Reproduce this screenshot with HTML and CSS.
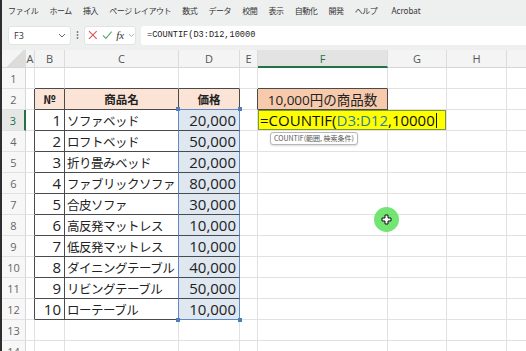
FILE: index.html
```html
<!DOCTYPE html>
<html lang="ja">
<head>
    <meta charset="UTF-8">
    <title>COUNTIF</title>
    <link rel="stylesheet" href="styles.css">
</head>
<body>
<div class="app">
    <div class="tabs">
        <span>ファイル</span><span>ホーム</span><span>挿入</span><span>ページ レイアウト</span><span>数式</span><span>データ</span><span>校閲</span><span>表示</span><span>自動化</span><span>開発</span><span>ヘルプ</span><span>Acrobat</span>
    </div>

    <div class="fbar">
        <div class="namebox">
            <span>F3</span>
            <svg width="8" height="5" viewBox="0 0 8 5"><path d="M1 1l3 3 3-3" stroke="#666" stroke-width="1" fill="none"/></svg>
        </div>
        <svg class="dots" width="3" height="10" viewBox="0 0 3 10"><circle cx="1.5" cy="2" r="0.9" fill="#777"/><circle cx="1.5" cy="5" r="0.9" fill="#777"/><circle cx="1.5" cy="8" r="0.9" fill="#777"/></svg>
        <div class="fxbox">
            <svg width="10" height="10" viewBox="0 0 10 10"><path d="M1 1l8 8M9 1l-8 8" stroke="#d9534f" stroke-width="1.1" fill="none"/></svg>
            <svg width="11" height="10" viewBox="0 0 11 10"><path d="M1 5.5l3 3 6-7" stroke="#5aa36a" stroke-width="1.1" fill="none"/></svg>
            <span class="fx">fx</span>
            <svg width="7" height="5" viewBox="0 0 7 5"><path d="M1 1l2.5 2.5 2.5-2.5" stroke="#aaa" stroke-width="1" fill="none"/></svg>
        </div>
        <div class="formula">=COUNTIF(D3:D12,10000</div>
    </div>

    <div class="sheet">
        <table class="grid">
            <colgroup>
                <col style="width:24px"><col style="width:9px"><col style="width:30px"><col style="width:114px"><col style="width:61px"><col style="width:18px"><col style="width:130px"><col style="width:59px"><col style="width:60px"><col style="width:60px">
            </colgroup>
            <tr class="colhead">
                <th class="corner"></th><th>A</th><th>B</th><th>C</th><th>D</th><th>E</th><th class="sel">F</th><th>G</th><th>H</th><th></th>
            </tr>
            <tr>
                <th class="rh">1</th><td></td><td class="ab"></td><td class="ab"></td><td class="ab"></td><td></td><td class="ab"></td><td></td><td></td><td></td>
            </tr>
            <tr>
                <th class="rh">2</th><td class="lt"></td><td class="t hd">№</td><td class="t hd">商品名</td><td class="t hd dtop">価格</td><td class="lt"></td><td class="t cnt">10,000円の商品数</td><td></td><td></td><td></td>
            </tr>
            <tr>
                <th class="rh sel">3</th><td class="lt"></td><td class="t no">1</td><td class="t name">ソファベッド</td><td class="t pr first">20,000</td><td></td>
                <td class="edit" colspan="2">=COUNTIF(<span class="ref">D3:D12</span>,10000<span class="caret"></span><span class="tip">COUNTIF(範囲, 検索条件)</span></td><td></td><td></td>
            </tr>
            <tr>
                <th class="rh">4</th><td class="lt"></td><td class="t no">2</td><td class="t name">ロフトベッド</td><td class="t pr">50,000</td><td></td><td></td><td></td><td></td><td></td>
            </tr>
            <tr>
                <th class="rh">5</th><td class="lt"></td><td class="t no">3</td><td class="t name">折り畳みベッド</td><td class="t pr">20,000</td><td></td><td></td><td></td><td></td><td></td>
            </tr>
            <tr>
                <th class="rh">6</th><td class="lt"></td><td class="t no">4</td><td class="t name">ファブリックソファ</td><td class="t pr">80,000</td><td></td><td></td><td></td><td></td><td></td>
            </tr>
            <tr>
                <th class="rh">7</th><td class="lt"></td><td class="t no">5</td><td class="t name">合皮ソファ</td><td class="t pr">30,000</td><td></td><td></td><td></td><td></td><td></td>
            </tr>
            <tr>
                <th class="rh">8</th><td class="lt"></td><td class="t no">6</td><td class="t name">高反発マットレス</td><td class="t pr">10,000</td><td></td><td></td><td></td><td></td><td></td>
            </tr>
            <tr>
                <th class="rh">9</th><td class="lt"></td><td class="t no">7</td><td class="t name">低反発マットレス</td><td class="t pr">10,000</td><td></td><td></td><td></td><td></td><td></td>
            </tr>
            <tr>
                <th class="rh">10</th><td class="lt"></td><td class="t no">8</td><td class="t name">ダイニングテーブル</td><td class="t pr">40,000</td><td></td><td></td><td></td><td></td><td></td>
            </tr>
            <tr>
                <th class="rh">11</th><td class="lt"></td><td class="t no">9</td><td class="t name">リビングテーブル</td><td class="t pr">50,000</td><td></td><td></td><td></td><td></td><td></td>
            </tr>
            <tr>
                <th class="rh">12</th><td class="lt"></td><td class="t no">10</td><td class="t name">ローテーブル</td><td class="t pr last">10,000</td><td></td><td></td><td></td><td></td><td></td>
            </tr>
            <tr>
                <th class="rh">13</th><td></td><td></td><td></td><td></td><td></td><td></td><td></td><td></td><td></td>
            </tr>
            <tr>
                <th class="rh">14</th><td></td><td></td><td></td><td></td><td></td><td></td><td></td><td></td><td></td>
            </tr>
        </table>

        <div class="pointer">
            <svg width="11" height="11" viewBox="0 0 11 11"><path d="M4 1h3v3h3v3H7v3H4V7H1V4h3z" fill="#fff" stroke="#111" stroke-width="1"/></svg>
        </div>
    </div>
</div>
</body>
</html>
```

FILE: styles.css
```css
body {
    margin: 0;
    background: #fff;
    font-family: "Open Sans", "Noto Sans CJK JP", sans-serif;
    overflow: hidden;
}
.app {
    width: 524px;
    height: 351px;
    border-left: 2px solid #2e2e2e;
    overflow: hidden;
    background: #eef0ef;
}

/* ribbon tabs */
.tabs {
    height: 20px;
    display: flex;
    align-items: center;
    gap: 11px;
    padding-left: 6px;
    font-family: "Noto Sans CJK JP", sans-serif;
    font-size: 8px;
    letter-spacing: -0.4px;
    color: #333;
}
.tabs span:last-child {
    margin-left: 3px;
    font-family: "Noto Sans", sans-serif;
    letter-spacing: 0;
}

/* formula bar */
.fbar {
    height: 30px;
    display: flex;
    align-items: center;
    padding-left: 6px;
}
.namebox {
    width: 63px;
    height: 19px;
    box-sizing: border-box;
    background: #fff;
    border: 1px solid #e2e4e3;
    border-radius: 3px;
    display: flex;
    align-items: center;
    justify-content: space-between;
    padding: 0 4px 0 5px;
    font-size: 9px;
    color: #333;
}
.dots {
    margin: 0 5px 0 5px;
}
.fxbox {
    width: 52px;
    height: 19px;
    box-sizing: border-box;
    background: #fff;
    border: 1px solid #e2e4e3;
    border-radius: 3px;
    display: flex;
    align-items: center;
    gap: 4px;
    padding-left: 3px;
}
.fx {
    font-family: "Liberation Serif", serif;
    font-style: italic;
    font-size: 11px;
    color: #333;
}
.formula {
    flex: 1;
    height: 19px;
    margin-left: 5px;
    background: #fff;
    border-radius: 3px 0 0 3px;
    padding-left: 6px;
    font-family: "Liberation Mono", monospace;
    font-size: 8.6px;
    line-height: 19px;
    color: #222;
}

/* sheet */
.sheet {
    position: relative;
    background: #fff;
}
.grid {
    table-layout: fixed;
    width: 565px;
    border-collapse: separate;
    border-spacing: 0;
}
.grid tr {
    height: 21px;
}
.grid td, .grid th {
    padding: 0;
    border-right: 1px solid #e1e1e1;
    border-bottom: 1px solid #e1e1e1;
    white-space: nowrap;
    overflow: visible;
}
.grid .colhead {
    height: 18px;
}
.colhead th {
    background: #f4f4f4;
    font-weight: normal;
    font-size: 11px;
    color: #555;
    border-right-color: #dcdcdc;
    border-bottom-color: #d6d6d6;
}
.colhead th.sel {
    background: #e3e3e3;
    color: #217346;
    border-bottom: 2px solid #217346;
}
.corner {
    background: linear-gradient(135deg, #f4f4f4 55%, #dcdcdc 55%) !important;
}
.rh {
    background: #f7f7f7;
    font-weight: normal;
    font-size: 11px;
    color: #666;
    border-right-color: #d6d6d6 !important;
}
.rh.sel {
    background: #e6e6e6;
    color: #217346;
    border-right: 2px solid #217346 !important;
}

/* table borders */
.grid .ab {
    border-bottom-color: #4a4a4a;
}
.grid .lt {
    border-right-color: #4a4a4a;
}
.grid .t {
    border-right-color: #4a4a4a;
    border-bottom-color: #4a4a4a;
}
.hd {
    background: #fbe3d5;
    text-align: center;
    font-family: "Noto Sans CJK JP", sans-serif;
    font-weight: bold;
    font-size: 11.5px;
    color: #222;
}
.no {
    text-align: right;
    padding-right: 3px !important;
    font-size: 15px;
    color: #222;
}
.grid .name {
    padding-left: 2px;
    font-family: "Noto Sans CJK JP", sans-serif;
    font-size: 12.5px;
    letter-spacing: -0.5px;
    color: #222;
    border-right-color: #5e89c2;
}
.grid .pr {
    position: relative;
    text-align: right;
    padding-right: 3px;
    font-size: 15px;
    color: #222;
    background: #dfe7f0;
    border-right-color: #5e89c2;
}
.grid .dtop {
    border-bottom-color: #5e89c2;
}
.grid .last {
    border-bottom-color: #5e89c2;
}
.first::before, .first::after, .last::before, .last::after {
    content: "";
    position: absolute;
    width: 4px;
    height: 4px;
    background: #4f7dbd;
}
.first::before { top: -3px; left: -3px; }
.first::after { top: -3px; right: -3px; }
.last::before { bottom: -3px; left: -3px; }
.last::after { bottom: -3px; right: -3px; }

.cnt {
    background: #f7caac;
    text-align: center;
    font-size: 13.5px;
    color: #222;
}
.edit {
    position: relative;
    background: #ffff00;
    box-shadow: inset 0 0 0 1px #7d9a3a;
    padding-left: 2px !important;
    font-size: 15px;
    color: #111;
}
.ref {
    color: #2f7f9a;
}
.caret {
    display: inline-block;
    width: 1px;
    height: 15px;
    margin-left: 1px;
    vertical-align: -2px;
    background: #111;
}
.tip {
    position: absolute;
    top: 22px;
    left: 12px;
    height: 11px;
    padding: 0 3px;
    background: #fff;
    border: 1px solid #b8b8b8;
    border-radius: 3px;
    font-family: "Noto Sans CJK JP", sans-serif;
    font-size: 7px;
    line-height: 11px;
    color: #555;
    box-shadow: 0 1px 2px rgba(0, 0, 0, 0.15);
}

.pointer {
    position: absolute;
    left: 372px;
    top: 157px;
    width: 25px;
    height: 25px;
    border-radius: 50%;
    background: rgba(90, 225, 90, 0.85);
    display: flex;
    align-items: center;
    justify-content: center;
}
```
